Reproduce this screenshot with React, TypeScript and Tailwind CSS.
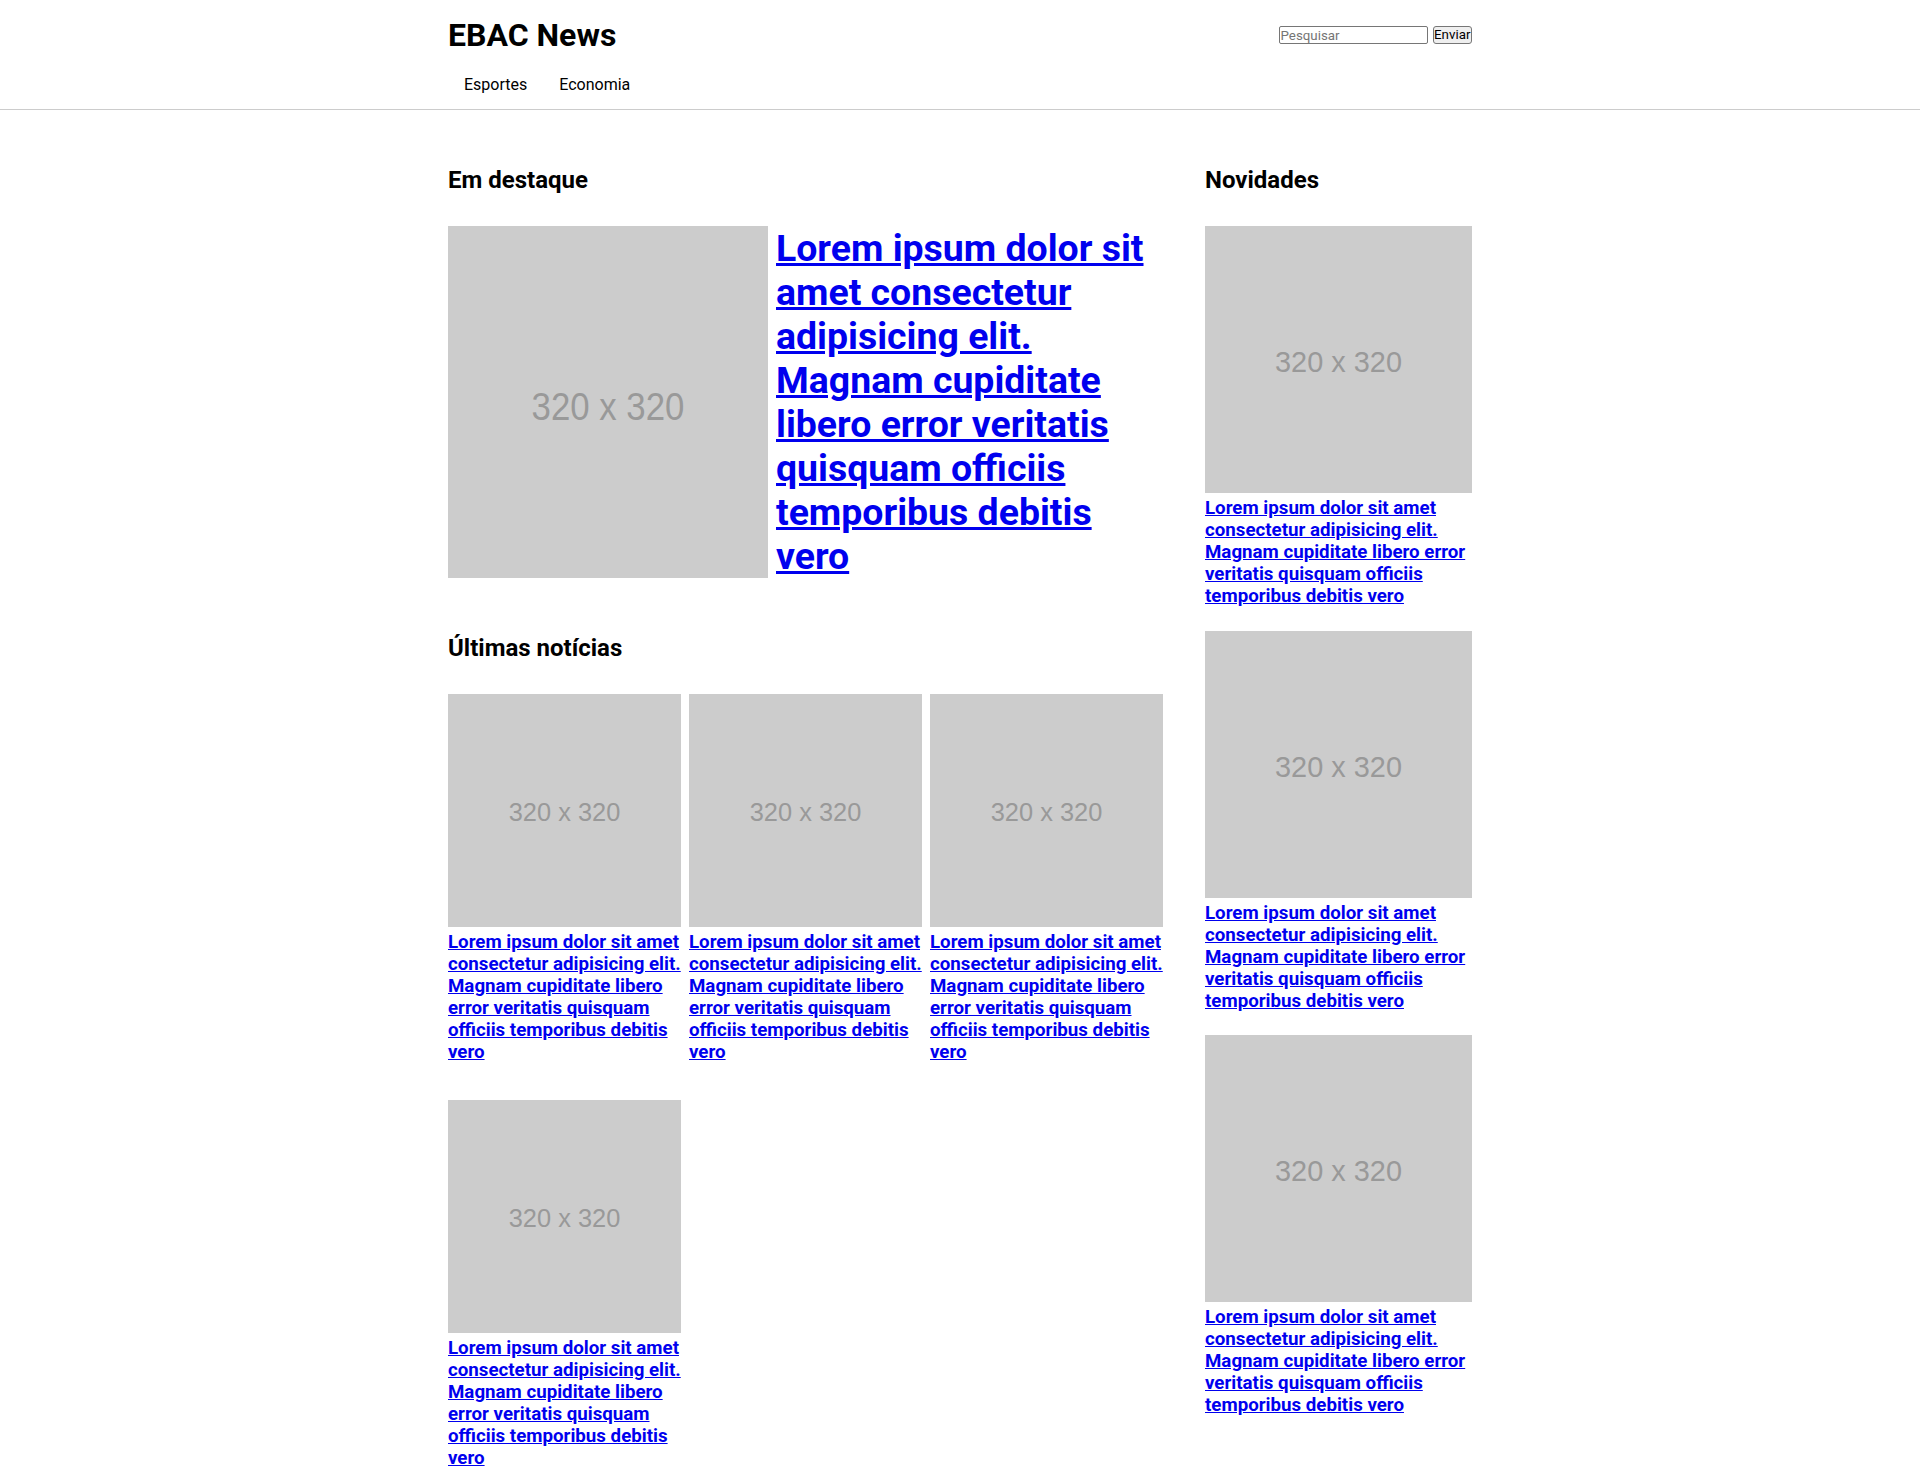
import React from "react";

const TEXT =
  "Lorem ipsum dolor sit amet consectetur adipisicing elit. Magnam cupiditate libero error veritatis quisquam officiis temporibus debitis vero";

function GridItem() {
  return (
    <div className="flex flex-col">
      <div className="aspect-square w-full bg-[#cccccc] flex items-center justify-center">
        <span className="font-['Liberation_Sans',Arial,sans-serif] text-[25.4px] text-[#999999] leading-none translate-y-[2px]">
          320 x 320
        </span>
      </div>
      <h3 className="mt-[4px] text-[18.72px] font-bold leading-[normal]">
        <a href="#" className="text-[#0000ee] underline">
          {TEXT}
        </a>
      </h3>
    </div>
  );
}

function SideItem() {
  return (
    <div className="flex flex-col">
      <div className="aspect-square w-full bg-[#cccccc] flex items-center justify-center">
        <span className="font-['Liberation_Sans',Arial,sans-serif] text-[28.9px] text-[#999999] leading-none translate-y-[3px]">
          320 x 320
        </span>
      </div>
      <h3 className="mt-[4px] text-[18.72px] font-bold leading-[normal]">
        <a href="#" className="text-[#0000ee] underline">
          {TEXT}
        </a>
      </h3>
    </div>
  );
}

export default function App() {
  return (
    <div className="min-h-screen bg-white text-black font-['Roboto',Arial,sans-serif]">
      <header className="border-b border-[#cccccc]">
        <div className="mx-auto w-[1024px] pt-[16px] pb-[15px]">
          <div className="flex items-center justify-between">
            <h1 className="text-[32px] font-bold leading-[normal]">EBAC News</h1>
            <form
              className="flex items-center gap-[4.5px]"
              onSubmit={(e) => e.preventDefault()}
            >
              <input
                type="text"
                placeholder="Pesquisar"
                className="h-[18px] w-[149.5px] border border-[#767676] rounded-[2px] bg-white px-[1px] text-[13.33px] leading-none text-black placeholder:text-[#757575] outline-none font-['Roboto',Arial,sans-serif]"
              />
              <button
                type="submit"
                className="h-[18px] w-[39.5px] border border-[#767676] rounded-[3px] bg-[#efefef] text-[13.33px] leading-none text-black flex items-center justify-center px-0 font-['Roboto',Arial,sans-serif]"
              >
                Enviar
              </button>
            </form>
          </div>
          <nav className="mt-[21px]">
            <ul className="flex">
              <li className="px-[16px] text-[16px] leading-[normal]">
                <a href="#">Esportes</a>
              </li>
              <li className="px-[16px] text-[16px] leading-[normal]">
                <a href="#">Economia</a>
              </li>
            </ul>
          </nav>
        </div>
      </header>

      <main className="mx-auto w-[1024px] pt-[56px] pb-[40px]">
        <div className="grid grid-cols-[715px_267px] justify-between">
          <div className="flex flex-col">
            <section>
              <h2 className="text-[24px] font-bold leading-[normal]">Em destaque</h2>
              <div className="mt-[32px] flex gap-[8px]">
                <div className="w-[320px] shrink-0 self-stretch bg-[#cccccc] flex items-center justify-center">
                  <span className="font-['Liberation_Sans',Arial,sans-serif] text-[34.8px] text-[#999999] leading-none scale-y-[1.1] translate-y-[5px]">
                    320 x 320
                  </span>
                </div>
                <h2 className="text-[37.44px] font-bold leading-[normal]">
                  <a href="#" className="text-[#0000ee] underline">
                    {TEXT}
                  </a>
                </h2>
              </div>
            </section>
            <section className="mt-[56px]">
              <h2 className="text-[24px] font-bold leading-[normal]">Últimas notícias</h2>
              <div className="mt-[32px] grid grid-cols-3 gap-x-[8px] gap-y-[37px]">
                <GridItem />
                <GridItem />
                <GridItem />
                <GridItem />
              </div>
            </section>
          </div>
          <aside className="flex flex-col">
            <h2 className="text-[24px] font-bold leading-[normal]">Novidades</h2>
            <div className="mt-[32px] flex flex-col gap-[23.5px]">
              <SideItem />
              <SideItem />
              <SideItem />
            </div>
          </aside>
        </div>
      </main>
    </div>
  );
}
